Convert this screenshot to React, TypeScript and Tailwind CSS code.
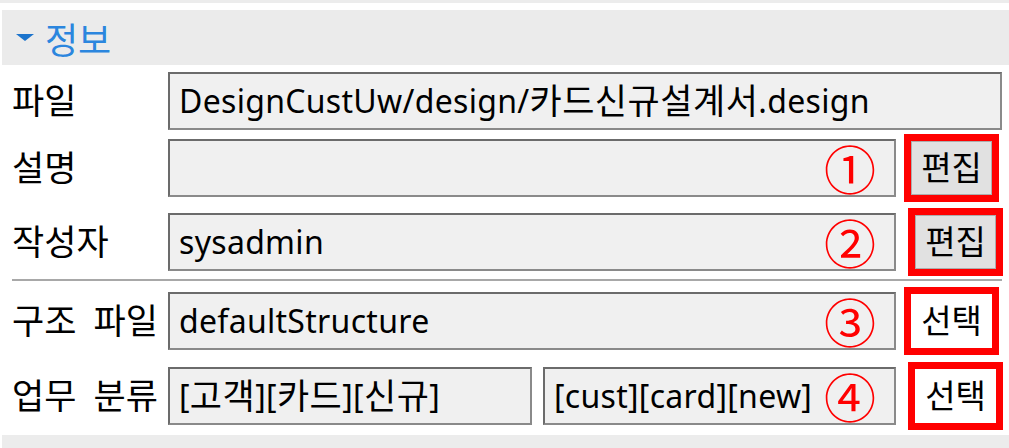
import type { ReactNode } from "react";

const font = "font-['Noto_Sans','Noto_Sans_CJK_KR',sans-serif]";

// Hangul runs are drawn a bit larger so they keep the width of the original UI font
function mixed(text: string): ReactNode {
  return text.split(/([가-힣]+)/).map((part, i) =>
    /[가-힣]/.test(part) ? (
      <span key={i} className="text-[35px] tracking-[0.5px]">
        {part}
      </span>
    ) : (
      part
    )
  );
}

function Field({ value, className }: { value?: string; className?: string }) {
  return (
    <div
      className={`h-[58px] flex items-center border-2 border-[#8a8a8a] border-t-[#6b6b6b] border-l-[#6b6b6b] bg-[#f0f0f0] pl-[9px] text-[32px] tracking-[0.3px] text-black overflow-hidden whitespace-nowrap ${className ?? ""}`}
    >
      {value ? mixed(value) : null}
    </div>
  );
}

function Mark({ n }: { n: string }) {
  return (
    <span className="absolute right-[20px] top-1/2 -translate-y-1/2 text-[52px] leading-none text-[#ff0000] font-['Noto_Sans_CJK_KR',sans-serif]">
      {n}
    </span>
  );
}

function ActionButton({ label, grey }: { label: string; grey?: boolean }) {
  return (
    <div className="w-[95px] h-[68px] border-[7px] border-[#ff0000] flex">
      <div
        className={`flex-1 flex items-center justify-center text-[33px] text-black ${
          grey ? "bg-[#e1e1e1] border border-[#adadad]" : "bg-white"
        }`}
      >
        {label}
      </div>
    </div>
  );
}

function Label({ children }: { children: string }) {
  return (
    <span className="w-[168px] pl-[12px] text-[35px] whitespace-nowrap [word-spacing:8px]">
      {children}
    </span>
  );
}

export default function App() {
  return (
    <div className={`w-[1009px] h-[448px] bg-white overflow-hidden ${font}`}>
      <div className="h-[3px] bg-[#ececec]" />
      <div className="h-[7px]" />
      <div className="ml-[2px] h-[55px] bg-[#ebebeb] flex items-center gap-[11px] pl-[14px]">
        <svg width="18" height="8" viewBox="0 0 18 8">
          <path d="M0 0H18L9 7Z" fill="#1c74cc" />
        </svg>
        <span className="text-[36px] text-[#2b86de] leading-none font-['Noto_Sans_CJK_KR',sans-serif]">정보</span>
      </div>

      <div className="flex flex-col">
        <div className="flex items-center mt-[7px]">
          <Label>파일</Label>
          <Field value="DesignCustUw/design/카드신규설계서.design" className="w-[834px]" />
        </div>

        <div className="flex items-center mt-[4px]">
          <Label>설명</Label>
          <div className="relative">
            <Field className="w-[728px] h-[57px]" />
            <Mark n="①" />
          </div>
          <div className="ml-[8px]">
            <ActionButton label="편집" grey />
          </div>
        </div>

        <div className="flex items-center mt-[6px]">
          <Label>작성자</Label>
          <div className="relative">
            <Field value="sysadmin" className="w-[728px] h-[56px]" />
            <Mark n="②" />
          </div>
          <div className="ml-[12px]">
            <ActionButton label="편집" grey />
          </div>
        </div>

        <div className="ml-[12px] mr-[7px] mt-[3px] h-[2px] bg-[#a8a8a8]" />

        <div className="flex items-center mt-[6px]">
          <Label>구조 파일</Label>
          <div className="relative">
            <Field value="defaultStructure" className="w-[728px] h-[57px]" />
            <Mark n="③" />
          </div>
          <div className="ml-[8px]">
            <ActionButton label="선택" />
          </div>
        </div>

        <div className="flex items-center mt-[7px]">
          <Label>업무 분류</Label>
          <Field value="[고객][카드][신규]" className="w-[364px]" />
          <div className="relative ml-[11px]">
            <Field value="[cust][card][new]" className="w-[353px]" />
            <Mark n="④" />
          </div>
          <div className="ml-[12px]">
            <ActionButton label="선택" />
          </div>
        </div>
      </div>

      <div className="mt-[5px] ml-[2px] h-[20px] bg-[#ececec]" />
    </div>
  );
}
